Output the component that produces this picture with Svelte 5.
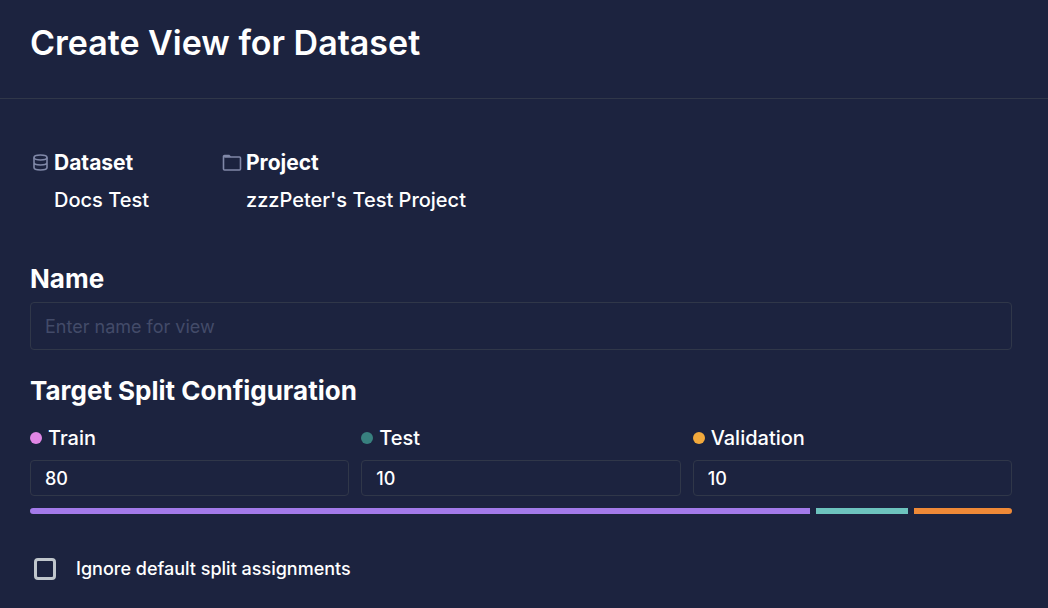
<script lang="ts">
	let name = ''
	let ignoreDefaults = false
	let splits = [
		{ id: 'train', label: 'Train', value: '80', dot: '#e086e5', bar: '#a37aea' },
		{ id: 'test', label: 'Test', value: '10', dot: '#38807f', bar: '#6dc3be' },
		{ id: 'validation', label: 'Validation', value: '10', dot: '#f2a93c', bar: '#ef8937' }
	]
</script>

<main>
	<header>
		<h1>Create View for Dataset</h1>
	</header>

	<form>
		<dl>
			<div class="source">
				<dt>
					<svg width="20" height="20" viewBox="0 0 20 20">
						<ellipse cx="10.5" cy="4.5" rx="6.5" ry="2.5" />
						<path d="M4 4.500v10c0 1.500 3 2.500 6.500 2.500s6.500-1 6.500-2.500v-10M4 9.500c0 1.500 3 2.500 6.500 2.500s6.500-1 6.500-2.500" />
					</svg>
					Dataset
				</dt>
				<dd>Docs Test</dd>
			</div>
			<div class="source">
				<dt>
					<svg width="20" height="20" viewBox="0 0 20 20">
						<path d="M2.500 4h15a1 1 0 0 1 1 1v11a1 1 0 0 1-1 1h-15a1 1 0 0 1-1-1V3.500a1 1 0 0 1 1-1h4.500L8.500 4M2 3.300h5.500" />
					</svg>
					Project
				</dt>
				<dd>zzzPeter's Test Project</dd>
			</div>
		</dl>

		<label class="heading" for="name">Name</label>
		<input id="name" class="name" type="text" placeholder="Enter name for view" bind:value={name} />

		<h2 class="heading">Target Split Configuration</h2>
		<div class="splits">
			{#each splits as split}
				<div>
					<label class="splitLabel" for={split.id}>
						<span class="dot" style="background-color: {split.dot}"></span>
						{split.label}
					</label>
					<input id={split.id} type="text" inputmode="numeric" bind:value={split.value} />
				</div>
			{/each}
		</div>
		<div class="bar">
			{#each splits as split}
				<div class="segment" style="width: {Number(split.value) || 0}%; background-color: {split.bar}"></div>
			{/each}
		</div>

		<label class="ignore">
			<input type="checkbox" bind:checked={ignoreDefaults} />
			Ignore default split assignments
		</label>
	</form>
</main>

<style>
	:global(body) {
		margin: 0;
		background-color: #1c233f;
	}
	main {
		color: #fff;
		font-family: Inter, sans-serif;
		font-size: 20px;
		line-height: 28px;
		font-weight: 500;
	}
	header {
		padding: 23px 30px 35px;
		border-bottom: 1px solid #303749;
	}
	h1 {
		margin: 0;
		font-size: 34px;
		line-height: 40px;
		font-weight: 600;
	}
	form {
		padding: 50px 36px 24px 30px;
	}
	dl {
		display: flex;
		gap: 73px;
		margin: 0 0 48px;
	}
	dt {
		display: flex;
		align-items: center;
		gap: 4px;
		font-size: 21px;
		font-weight: 700;
	}
	dd {
		margin: 9px 0 0 24px;
	}
	svg {
		fill: none;
		stroke: #8088a8;
		stroke-width: 1.6;
	}
	.heading {
		display: block;
		margin: 0;
		font-size: 26px;
		line-height: 34px;
		font-weight: 700;
	}
	input[type='text'] {
		box-sizing: border-box;
		width: 100%;
		height: 36px;
		padding: 0 14px;
		border: 1px solid #303749;
		border-radius: 4px;
		background: none;
		color: #fff;
		font: inherit;
		font-size: 18px;
	}
	input.name {
		display: block;
		height: 48px;
		margin: 6px 0 24px;
	}
	input::placeholder {
		color: #434b69;
		font-weight: 400;
	}
	.splits {
		display: grid;
		grid-template-columns: repeat(3, 1fr);
		gap: 12px;
		margin-top: 16px;
	}
	.splitLabel {
		display: flex;
		align-items: center;
		gap: 6px;
		margin-bottom: 8px;
	}
	.dot {
		width: 12px;
		height: 12px;
		border-radius: 50%;
	}
	.bar {
		display: flex;
		height: 6px;
		margin-top: 12px;
		border-radius: 3px;
		overflow: hidden;
	}
	.segment {
		box-sizing: border-box;
		border-right: 6px solid #1c233f;
	}
	.segment:last-child {
		border-right: none;
	}
	.ignore {
		display: flex;
		align-items: center;
		gap: 20px;
		margin: 41px 0 0 4px;
		font-size: 18px;
	}
	input[type='checkbox'] {
		appearance: none;
		width: 22px;
		height: 22px;
		margin: 0;
		border: 3px solid #c0c6cc;
		border-radius: 4px;
	}
	input[type='checkbox']:checked {
		background-color: #a37aea;
	}
</style>
